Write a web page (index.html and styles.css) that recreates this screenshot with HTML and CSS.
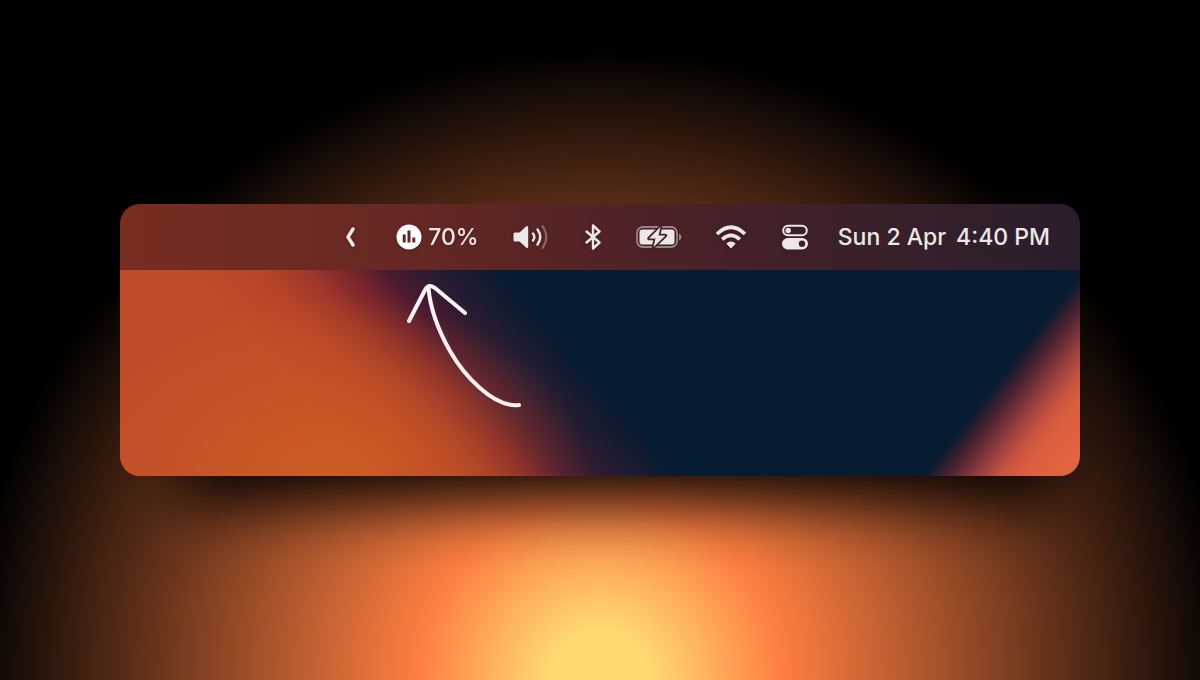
FILE: index.html
```html
<!DOCTYPE html>
<html lang="en">
<head>
<meta charset="utf-8">
<title>Menu bar</title>
<link rel="stylesheet" href="styles.css">
</head>
<body>
<main class="stage">
  <section class="screen">
    <header class="menubar">
      <button class="item item-chevron" aria-label="Show hidden items">
        <svg width="12" height="22" viewBox="0 0 12 22"><path d="M9 3L4 11L9 19" fill="none" stroke="currentColor" stroke-width="3.400" stroke-linecap="round" stroke-linejoin="round"/></svg>
      </button>
      <button class="item item-usage">
        <svg width="26" height="26" viewBox="0 0 26 26"><circle cx="13" cy="13" r="12.5" fill="#fff"/><path d="M8.200 10.500v8M13 6.500v12M17.800 13.500v5" stroke="#5c2825" stroke-width="3"/></svg>
        <span>70%</span>
      </button>
      <button class="item item-volume" aria-label="Volume">
        <svg width="36" height="28" viewBox="0 0 36 28"><path d="M2 9.500h4.500L13 3.500q2.200-1.600 2.200 1v19q0 2.600-2.200 1L6.500 18.500H2q-1.500 0-1.500-1.500v-6q0-1.500 1.500-1.500z" fill="currentColor"/><g fill="none" stroke="currentColor" stroke-width="2.400" stroke-linecap="round"><path d="M20 10.500q2.600 3.500 0 7"/><path d="M24.500 6.500q5.500 7.500 0 15"/><path d="M29.500 3q7.500 11 0 22" stroke-width="2" opacity=".35"/></g></svg>
      </button>
      <button class="item item-bluetooth" aria-label="Bluetooth">
        <svg width="18" height="28" viewBox="0 0 18 28"><path d="M2.500 8.500L15.500 19.500L9 25.500V2.500L15.500 8.500L2.500 19.500" fill="none" stroke="currentColor" stroke-width="2.400" stroke-linejoin="round" stroke-linecap="round"/></svg>
      </button>
      <button class="item item-battery" aria-label="Battery charging">
        <svg width="46" height="26" viewBox="0 0 46 26"><rect x="1" y="3" width="40" height="20" rx="6" fill="none" stroke="currentColor" stroke-width="1.800" opacity=".5"/><path d="M43 9.500q2.500 1 2.500 3.500T43 16.500z" fill="currentColor" opacity=".5"/><rect x="3.500" y="5.500" width="35" height="15" rx="3" fill="currentColor"/><path d="M24.500 3L13 14.500h6.500L17.500 23L29.500 11.500h-7z" fill="currentColor" stroke="#48222a" stroke-width="3.600" stroke-linejoin="round" paint-order="stroke"/></svg>
      </button>
      <button class="item item-wifi" aria-label="Wi-Fi">
        <svg width="32" height="24" viewBox="0 0 32 24"><g fill="none" stroke="currentColor" stroke-width="3.600"><path d="M2 9Q16-4.500 30 9"/><path d="M7.200 14.300q8.800-8 17.600 0"/></g><path d="M11.300 18.500q4.700-3.800 9.400 0L16 23.500z" fill="currentColor"/></svg>
      </button>
      <button class="item item-control" aria-label="Control Center">
        <svg width="26" height="26" viewBox="0 0 26 26"><rect x="1.200" y="1.700" width="23.600" height="9.600" rx="4.800" fill="none" stroke="currentColor" stroke-width="2"/><circle cx="6.200" cy="6.500" r="2.700" fill="currentColor"/><rect y="14" width="26" height="11.500" rx="5.700" fill="currentColor"/><circle cx="20" cy="19.800" r="3.200" fill="#3b202a"/></svg>
      </button>
      <time class="clock" datetime="16:40"><span>Sun 2 Apr</span><span>4:40 PM</span></time>
    </header>
    <div class="desktop">
      <svg class="arrow" width="120" height="130" viewBox="0 0 120 130" aria-hidden="true"><path d="M10 41L26 10Q30 3 36 8L66 33M29.500 8C31 26 38 48 51 71C64 94 94 128 120 125"/></svg>
    </div>
  </section>
</main>
</body>
</html>
```
FILE: styles.css
```css
* {
  box-sizing: border-box;
}

body {
  margin: 0;
  background: #000;
  font-family: Inter, "Liberation Sans", sans-serif;
}

.stage {
  min-height: 100vh;
  padding: 0 10%;
  display: flex;
  align-items: center;
  background: radial-gradient(circle at 50% 100%, #ffdb72 48px, #ff7f42 180px, #000 630px);
}

.screen {
  flex: 1;
  overflow: hidden;
  border-radius: 20px;
  box-shadow: 16px 66px 60px -40px rgba(0, 0, 0, 0.95);
}

.menubar {
  display: flex;
  align-items: center;
  justify-content: flex-end;
  height: 66px;
  padding: 0 30px 1px;
  color: #ece8e8;
  font-size: 23px;
  font-weight: 500;
  background: linear-gradient(90deg, #782e20, #662824 30%, #4d2226 55%, #38202a 80%, #2a1d2d);
}

.item {
  display: flex;
  align-items: center;
  gap: 6px;
  margin: 0;
  padding: 0;
  border: 0;
  background: none;
  color: inherit;
  font: inherit;
  filter: drop-shadow(0 1px 2px rgba(0, 0, 0, 0.2));
}

.item-chevron {
  margin-right: 40px;
}

.item-usage {
  margin-right: 34px;
}

.item-volume {
  margin-right: 35px;
}

.item-bluetooth {
  margin-right: 34px;
}

.item-battery {
  margin-right: 33px;
}

.item-wifi {
  margin-right: 35px;
}

.item-control {
  margin-right: 30px;
}

.clock {
  display: flex;
  gap: 10px;
  white-space: nowrap;
}

.desktop {
  padding: 10px 279px 66px;
  background:
    linear-gradient(128deg, rgba(7, 27, 49, 0) 86%, #45212f 88%, #9c4042 91%, #c9553f 93%, #dc603f 95%, #e2683f),
    radial-gradient(ellipse 260px 180px at 22% 100%, rgba(206, 94, 36, 0.9), rgba(200, 84, 38, 0)),
    linear-gradient(49deg, #c04d2b, #be4c29 22%, #b64528 28%, #a03729 32%, #76242c 36%, #4b1b30 39%, #2a1b31 43%, #071b31 49%);
}

.arrow {
  display: block;
  overflow: visible;
  fill: none;
  stroke: #fff0f0;
  stroke-width: 4;
  stroke-linecap: round;
  stroke-linejoin: round;
}
```
